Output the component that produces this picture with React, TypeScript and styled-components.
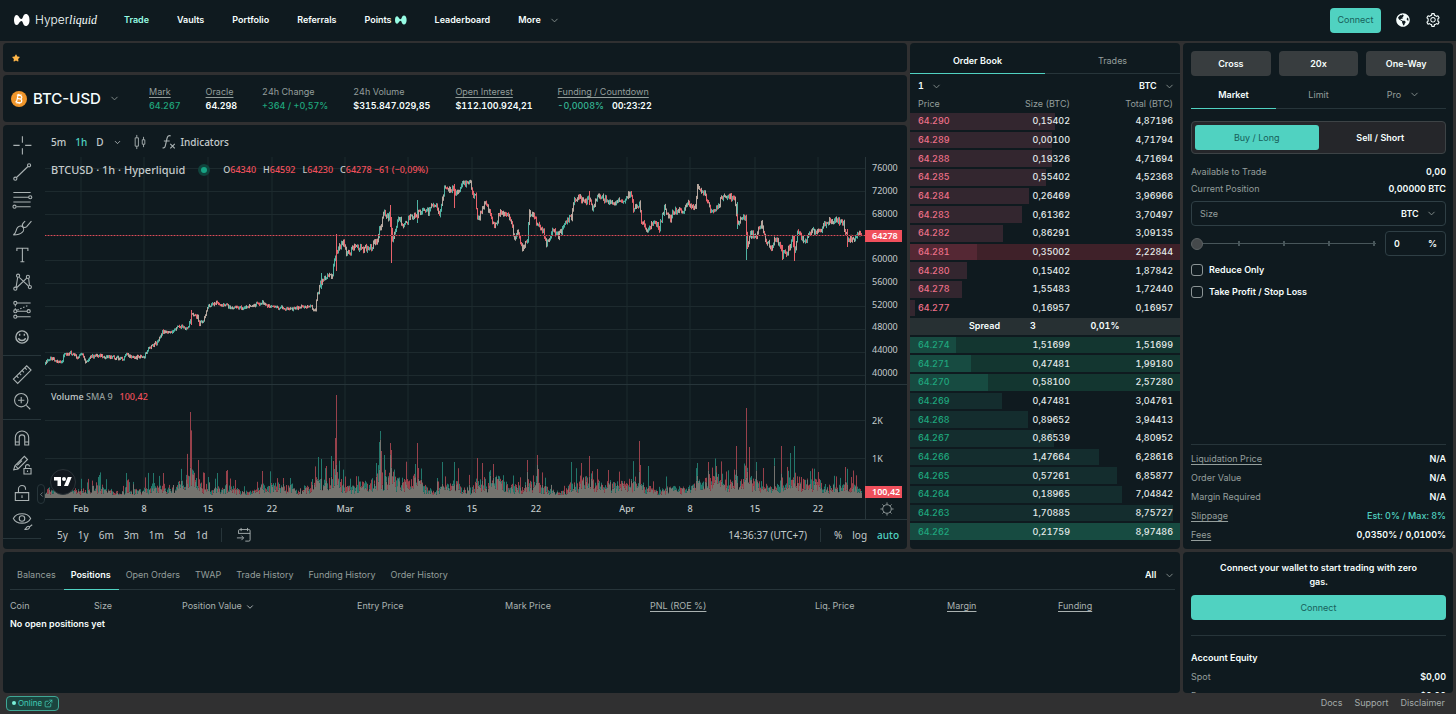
import React from "react";
import styled, { createGlobalStyle, css } from "styled-components";
import { ChevronDown, ChevronLeft, ExternalLink } from "lucide-react";
import { FaGlobeAmericas, FaStar } from "react-icons/fa";
import { AiOutlineSetting } from "react-icons/ai";

const c = {
  page: "#303031",
  panel: "#0f1a1f",
  line: "#27353a",
  grid: "#1d2a2e",
  text: "#f6fefd",
  muted: "#949e9c",
  teal: "#50d2c1",
  green: "#1fa67d",
  red: "#ed7088",
  chartText: "#c4cbcc",
  chartRed: "#f0505c",
};

const GlobalStyle = createGlobalStyle`
  *, *::before, *::after { box-sizing: border-box; }
  body {
    margin: 0;
    background: ${c.page};
    color: ${c.text};
    font: 400 9px/14px Inter, sans-serif;
    font-variant-numeric: tabular-nums;
  }
  button, input, select { font: inherit; color: inherit; margin: 0; }
  button, select { background: none; border: 0; padding: 0; cursor: pointer; }
  a { color: inherit; text-decoration: none; }
  svg { display: block; flex: none; }
`;

/* ---------- page frame ---------- */

const Page = styled.div`
  height: 100vh;
  min-height: 600px;
  display: flex;
  flex-direction: column;
`;

const Main = styled.main`
  flex: 1;
  min-height: 0;
  display: grid;
  grid-template-columns: minmax(0, 1fr) 270px 270px;
  grid-template-rows: auto minmax(0, 1fr);
  gap: 3px;
  padding: 2px 3px 0;
`;

const Panel = styled.section`
  background: ${c.panel};
  border-radius: 4px;
  min-width: 0;
  overflow: hidden;
`;

const Row = styled.div`
  display: flex;
  align-items: center;
  justify-content: space-between;
`;

const Muted = styled.span<{ $hint?: boolean }>`
  color: ${c.muted};
  ${(p) => p.$hint && css`text-decoration: underline; text-underline-offset: 2px;`}
`;

const Strong = styled.span<{ $color?: string }>`
  font-weight: ${(p) => (p.$color ? 500 : 600)};
  color: ${(p) => p.$color ?? c.text};
`;

/* ---------- header ---------- */

const Header = styled.header`
  height: 41px;
  flex: none;
  display: flex;
  align-items: center;
  padding: 0 15px 1px 14px;
  background: ${c.panel};
`;

const Brand = styled.a`
  display: flex;
  align-items: center;
  gap: 5px;
  width: 110px;
  font-size: 12px;
  font-weight: 300;
  line-height: 18px;
  em { font: italic 400 12px/18px "Liberation Serif", serif; }
`;

const Nav = styled.nav`
  display: flex;
  align-items: center;
  gap: 28px;
  font-weight: 600;
`;

const NavLink = styled.a<{ $active?: boolean }>`
  display: flex;
  align-items: center;
  gap: 3px;
  color: ${(p) => (p.$active ? "#97fce4" : c.text)};
`;

const NavMenu = styled.button`
  display: flex;
  align-items: center;
  gap: 8px;
  font-weight: 600;
`;

const HeaderTools = styled.div`
  margin-left: auto;
  display: flex;
  align-items: center;
  gap: 15px;
`;

const Primary = styled.button<{ $wide?: boolean }>`
  height: 25px;
  width: ${(p) => (p.$wide ? "100%" : "51px")};
  border-radius: 4px;
  background: ${c.teal};
  color: #17605a;
`;

const IconButton = styled.button`
  display: grid;
  place-items: center;
`;

const Bow = ({ size, color }: { size: number; color: string }) => (
  <svg width={size} height={size} viewBox="0 -1.5 16 16" aria-hidden="true">
    <path
      fill={color}
      d="M0 6.500C0 3.500 1 1.500 2.800 1.500C4.800 1.500 5.300 5.500 7.500 5.500C9 5.500 9 .5 11.800 .5C14.200 .5 15.500 3 15.500 6.500S14.200 12.500 11.800 12.500C9 12.500 9 7.500 7.500 7.500C5.300 7.500 4.800 11.500 2.800 11.500C1 11.500 0 9.500 0 6.500Z"
    />
  </svg>
);

/* ---------- market summary ---------- */

const MarketColumn = styled.div`
  display: flex;
  flex-direction: column;
  gap: 3px;
  min-width: 0;
`;

const Favorites = styled(Panel)`
  height: 29px;
  display: flex;
  align-items: center;
  padding-left: 9px;
`;

const Summary = styled(Panel)`
  height: 47px;
  display: flex;
  align-items: center;
  padding: 0 8px;
`;

const PairButton = styled.button`
  display: flex;
  align-items: center;
  gap: 6px;
  width: 138px;
  font-size: 15px;
  font-weight: 500;
  line-height: 20px;
  font-variant-numeric: normal;
  svg:last-child { margin-left: 2px; }
`;

const Stats = styled.dl`
  display: flex;
  gap: 25px;
  margin: 0;
  dd { margin: 0; }
`;

const Countdown = styled.span`
  margin-left: 8px;
  font-weight: 600;
  color: ${c.text};
`;

/* ---------- chart ---------- */

const ChartPanel = styled(Panel)`
  flex: 1;
  display: grid;
  grid-template-columns: 42px minmax(0, 1fr);
  font: 400 10px/14px "Noto Sans", sans-serif;
  color: ${c.chartText};
`;

const Tools = styled.div`
  display: flex;
  flex-direction: column;
  padding: 6px 0 6px;
`;

const ToolGroup = styled.div<{ $count: number }>`
  flex: ${(p) => p.$count} 0 auto;
  display: flex;
  flex-direction: column;
  width: 38px;
  padding-bottom: 4px;
  margin-bottom: 4px;
  border-bottom: 1px solid ${c.line};
`;

const ToolButton = styled.button`
  flex: 1;
  display: grid;
  place-items: center;
`;

const ChartBody = styled.div`
  position: relative;
  display: flex;
  flex-direction: column;
  min-width: 0;
`;

const ChartToolbar = styled.div`
  height: 32px;
  display: flex;
  align-items: center;
  padding: 2px 0 0 6px;
  gap: 9px;
`;

const ToolLabel = styled.button<{ $active?: boolean; $gap?: number }>`
  display: flex;
  align-items: center;
  gap: 3px;
  font-weight: 500;
  color: ${(p) => (p.$active ? c.teal : c.chartText)};
  margin-left: ${(p) => p.$gap ?? 0}px;
`;

const Plot = styled.div`
  flex: 1;
  display: grid;
  grid-template-columns: minmax(0, 1fr) 42px;
  grid-template-rows: 341px 21px;
`;

const Canvas = styled.svg`
  width: 100%;
  height: 100%;
  overflow: hidden;
  text { font: 500 9px "Noto Sans", sans-serif; fill: ${c.chartText}; text-anchor: middle; }
`;

const PriceAxis = styled.div`
  display: flex;
  flex-direction: column;
  border-left: 1px solid ${c.line};
  font-size: 9px;
`;

const PriceScale = styled.div<{ $h: number }>`
  height: ${(p) => p.$h}px;
  display: flex;
  flex-direction: column;
  & + & { border-top: 1px solid ${c.line}; padding-top: 17px; }
`;

const Tick = styled.span<{ $h?: number; $end?: boolean }>`
  ${(p) => (p.$h ? css`height: ${p.$h}px;` : css`flex: 1;`)}
  display: flex;
  align-items: ${(p) => (p.$end ? "flex-end" : "center")};
  padding-left: 6px;
`;

const PriceTag = styled.span`
  width: 37px;
  margin-left: -7px;
  padding-left: 7px;
  line-height: 12px;
  font-weight: 600;
  color: #fff;
  background: ${c.chartRed};
`;

const AxisCorner = styled.div`
  display: grid;
  place-items: center;
  border-left: 1px solid ${c.line};
`;

const Legend = styled.div<{ $top: number }>`
  position: absolute;
  left: 6px;
  top: ${(p) => p.$top}px;
  display: flex;
  align-items: center;
  gap: 7px;
  font-size: 9px;
  font-weight: 500;
`;

const Symbol = styled.span`
  font-size: 11px;
  line-height: 16px;
`;

const Live = styled.span`
  width: 12px;
  height: 12px;
  margin: 0 6px;
  border: 3px solid #10433c;
  border-radius: 50%;
  background: #17a384;
`;

const Down = styled.span`
  color: ${c.chartRed};
`;

const Watermark = styled.span`
  position: absolute;
  left: 5px;
  top: 344px;
  width: 26px;
  height: 26px;
  display: grid;
  place-items: center;
  border-radius: 50%;
  border: 1px solid #2a3338;
  background: #12181e;
`;

const Collapse = styled.button`
  position: absolute;
  left: -8px;
  top: 359px;
  width: 8px;
  height: 20px;
  display: grid;
  place-items: center;
  border: 1px solid ${c.line};
  border-radius: 4px;
`;

const RangeBar = styled.div`
  height: 30px;
  display: flex;
  align-items: center;
  gap: 10px;
  padding: 0 8px 0 12px;
  border-top: 1px solid ${c.line};
`;

const Divider = styled.span`
  width: 1px;
  height: 14px;
  margin: 0 3px;
  background: ${c.line};
`;

const Clock = styled.button`
  margin-left: auto;
`;

/* price path: plot x, plot y */
const pricePoints: number[][] = [
  [0, 207], [5, 201], [13, 206], [17, 204], [18, 198], [25, 196], [33, 200], [37, 197], [40, 205], [46, 200],
  [55, 199], [67, 200], [77, 202], [81, 198], [87, 201], [99, 199], [102, 193], [112, 185], [117, 174], [122, 175],
  [127, 176], [132, 169], [143, 171], [146, 157], [152, 160], [154, 167], [159, 162], [162, 150], [172, 146],
  [185, 150], [195, 151], [205, 149], [217, 146], [225, 150], [245, 152], [255, 150], [265, 150], [270, 153],
  [272, 138], [275, 128], [277, 120], [281, 121], [287, 119], [288, 106], [291, 96], [295, 88], [298, 84],
  [302, 98], [310, 90], [325, 92], [332, 81], [335, 70], [339, 55], [343, 61], [345, 58], [347, 84], [353, 60],
  [358, 68], [365, 60], [372, 58], [375, 54], [383, 55], [388, 47], [394, 56], [399, 32], [408, 32], [410, 38],
  [417, 26], [425, 26], [428, 43], [430, 35], [432, 63], [437, 53], [439, 46], [445, 56], [449, 71], [455, 54],
  [463, 58], [470, 83], [473, 73], [477, 94], [482, 81], [484, 56], [490, 63], [496, 70], [501, 86], [508, 73],
  [513, 79], [522, 63], [526, 61], [528, 43], [533, 39], [538, 46], [544, 40], [547, 51], [553, 38], [565, 46],
  [578, 44], [585, 37], [588, 51], [594, 46], [596, 63], [601, 73], [608, 65], [614, 71], [619, 51], [625, 63],
  [628, 55], [638, 53], [642, 47], [650, 48], [652, 31], [659, 36], [664, 52], [672, 53], [676, 41], [682, 40],
  [689, 40], [692, 65], [700, 60], [702, 91], [705, 76], [710, 80], [716, 65], [720, 83], [726, 91], [731, 78],
  [737, 98], [742, 95], [747, 81], [749, 96], [752, 75], [759, 83], [767, 74], [773, 75], [785, 63], [797, 65],
  [802, 81], [808, 83], [812, 75], [816, 78],
];

/* long wicks: plot x, top, bottom */
const wicks: number[][] = [
  [146, 153, 168], [291, 77, 114], [276, 116, 132], [345, 48, 70], [346, 60, 106], [372, 43, 66], [409, 27, 51],
  [544, 34, 48], [701, 60, 103], [737, 88, 103], [749, 78, 104], [692, 45, 72], [802, 72, 90],
];

/* volume peaks: plot x, height; a negative height marks a rising candle */
const volumePeaks: number[][] = [
  [53, -21], [81, -25], [108, -25], [118, 25], [145, 86], [153, 38], [163, -21], [172, -25], [181, 27], [190, 18],
  [217, 27], [245, -20], [273, -41], [276, -39], [281, 32], [291, 103], [290, 60], [331, -35], [335, -67],
  [339, -43], [345, 55], [346, 48], [372, 55], [373, 30], [397, -36], [409, -36], [432, 40], [437, 35], [448, 34],
  [482, 38], [492, -33], [526, -36], [536, 35], [544, 42], [563, 28], [594, 57], [595, 33], [603, -32], [652, -35],
  [663, 36], [671, 32], [691, 52], [701, 90], [704, 51], [711, -36], [718, 30], [729, -40], [736, 52], [745, -45],
  [749, -52], [773, 26], [800, 31],
];

const random = (seed: number) => () => {
  seed = (seed * 1664525 + 1013904223) % 4294967296;
  return seed / 4294967296;
};

function priceAt(x: number) {
  const i = Math.max(1, pricePoints.findIndex((p) => p[0] >= x));
  const [x0, y0] = pricePoints[i - 1];
  const [x1, y1] = pricePoints[i];
  return y0 + ((y1 - y0) * (x - x0)) / (x1 - x0);
}

function buildCandles() {
  const rnd = random(7);
  const paths = { up: "", down: "", mixed: "" };
  let prev = priceAt(0);
  for (let x = 0; x <= 816; x++) {
    const swing = x < 271 ? 3 : 6;
    const y = priceAt(x) + (rnd() - 0.5) * swing;
    const top = Math.min(prev, y) - rnd() * (swing / 3) - 0.5;
    const bottom = Math.max(prev, y) + rnd() * (swing / 3) + 0.5;
    const key = rnd() < 0.4 ? "mixed" : y < prev ? "up" : "down";
    paths[key] += `M${x + 0.5} ${top.toFixed(1)}V${bottom.toFixed(1)}`;
    prev = y;
  }
  wicks.forEach(([x, top, bottom], i) => {
    paths[i % 3 === 2 ? "up" : "down"] += `M${x + 0.5} ${top}V${bottom}`;
  });
  return paths;
}

function buildVolume() {
  const rnd = random(21);
  const paths = { up: "", down: "", mixed: "" };
  for (let x = 0; x <= 816; x++) {
    const near = volumePeaks.reduce((m, [px, h]) => Math.max(m, (Math.abs(h) * 0.5) / (1 + Math.abs(px - x) / 3)), 0);
    const swell = 1 + 0.35 * Math.sin(x / 17) + 0.25 * Math.sin(x / 7);
    const level = (x < 271 ? 7 : 9) * swell + near * 0.6;
    let a = level * (0.35 + rnd() * 0.9);
    let b = level * (0.35 + rnd() * 0.9);
    if (rnd() > 0.88) a *= 1.9;
    if (rnd() > 0.88) b *= 1.9;
    const peak = volumePeaks.find((p) => p[0] === x);
    if (peak) {
      if (peak[1] > 0) b = peak[1];
      else a = -peak[1];
    }
    const low = 341 - Math.max(3, Math.min(a, b));
    const high = 341 - Math.max(4, a, b);
    paths.mixed += `M${x + 0.5} 341V${low.toFixed(1)}`;
    paths[a > b ? "up" : "down"] += `M${x + 0.5} ${low.toFixed(1)}V${high.toFixed(1)}`;
  }
  return paths;
}

const candles = buildCandles();
const volume = buildVolume();

const dates: [string, number][] = [
  ["Feb", 36], ["8", 99], ["15", 163], ["22", 227], ["Mar", 300], ["8", 363], ["15", 427], ["22", 491],
  ["Apr", 582], ["8", 645], ["15", 710], ["22", 773],
];
const pct = (x: number) => `${(x / 820) * 100}%`;
const prices = ["76000", "72000", "68000", "", "60000", "56000", "52000", "48000", "44000", "40000"];

function PriceCanvas() {
  return (
    <Canvas role="img" aria-label="BTCUSD price and volume">
      <g stroke={c.grid}>
        {dates.map(([, x]) => (
          <line key={x} x1={pct(x)} x2={pct(x)} y1="0" y2="341" />
        ))}
        {prices.map((p, i) => p && (
          <line key={i} x1="0" x2="100%" y1={11.5 + i * 23} y2={11.5 + i * 23} />
        ))}
        <line x1="0" x2="100%" y1="263.5" y2="263.5" />
        <line x1="0" x2="100%" y1="301.5" y2="301.5" />
      </g>
      <line x1="0" x2="100%" y1="227.5" y2="227.5" stroke={c.line} />
      <svg viewBox="0 0 820 341" preserveAspectRatio="none" width="100%" height="341" fill="none">
        <path d={volume.mixed} stroke="#75746f" />
        <path d={volume.up} stroke="#22776b" />
        <path d={volume.down} stroke="#98414b" />
        <path d={candles.mixed} stroke="#b7a79e" />
        <path d={candles.up} stroke="#4fb3a3" />
        <path d={candles.down} stroke="#e8626b" />
      </svg>
      <line x1="0" x2="100%" y1="78.5" y2="78.5" stroke="#6b2f38" />
      <line x1="0" x2="100%" y1="78.5" y2="78.5" stroke="#d94f5a" strokeDasharray="1 2" />
    </Canvas>
  );
}

function TimeAxis() {
  return (
    <Canvas aria-label="Dates">
      {dates.map(([label, x]) => (
        <text key={x} x={pct(x)} y="14">{label}</text>
      ))}
    </Canvas>
  );
}

const Glyph = ({ children, size = 22 }: { children: React.ReactNode; size?: number }) => (
  <svg width={size} height={size} viewBox="0 0 28 28" fill="none" stroke="#aab2b3" strokeWidth="1.4" aria-hidden="true">
    {children}
  </svg>
);

const toolGroups: [string, React.ReactNode][][] = [
  [
    ["Cross", <path d="M14.500 3v8M14.500 18v8M3 14.500h8M18 14.500h8" />],
    ["Trend line", <><path d="M7 21 21.500 7" /><circle cx="5.500" cy="22.500" r="2" /><circle cx="23" cy="5.500" r="2" /></>],
    ["Fib retracement", <><path d="M3 4.500h22M3 10.500h19.500M3 16.500h22M7 22.500h18" /><circle cx="24.500" cy="10.500" r="2" /><circle cx="4.500" cy="22.500" r="2" /></>],
    ["Brush", <path d="M3 24c4-2 3-7 5.500-9.500 2-2 5-2 6.500-.5s1.500 4.500-.5 6.500C12 23 8 24 3 24ZM15 13.500c1.500 1.500 3.500 1.500 5 0L26 6.500M15 13.500c-1-1.500-.5-3.500 1-5L18 6.500" />],
    ["Text", <path d="M7.500 9V5.500h14V9M14.500 5.500v17M12 22.500h5" />],
    ["Pattern", <><path d="M6.500 20.500 8.500 8M10.500 8 22 19M22.500 9.500l1 9M20 9 7.500 21" /><circle cx="9" cy="6" r="2" /><circle cx="21.500" cy="7.500" r="2" /><circle cx="5.500" cy="22.500" r="2" /><circle cx="24" cy="20.500" r="2" /></>],
    ["Forecast", <><path d="M7.500 5H25M7.500 15.500h13M7.500 22.500H25" /><path strokeDasharray="2 2" d="M5.500 7.500v5M8 14l14-6" /><circle cx="5.500" cy="5" r="2" /><circle cx="5.500" cy="15.500" r="2" /><circle cx="22.500" cy="15.500" r="2" /><circle cx="5.500" cy="22.500" r="2" /></>],
    ["Icons", <g strokeWidth="1.800"><circle cx="14" cy="14" r="7.800" /><path d="M9.500 15.500c1 4 8 4 9 0M11 10v2.500M17 10v2.500" /></g>],
  ],
  [
    ["Measure", <path d="m3 20.500 17-17 5.500 5.500-17 17ZM7 16.500l2.500 2.500M10.500 13l2.500 2.500M14 9.500l2.500 2.500M17.500 6l2.500 2.500" />],
    ["Zoom in", <><circle cx="13" cy="13" r="8.500" /><path d="m19.500 19.500 5 5M13 9v8M9 13h8" /></>],
  ],
  [
    ["Magnet", <path d="M5.500 23V13.500a8.500 8.500 0 0 1 17 0V23h-5v-9.500a3.500 3.500 0 0 0-7 0V23ZM5.500 19h5M17.500 19h5" />],
    ["Stay in drawing mode", <><path d="M3.500 20 5 15 17 3l4 4L9 19ZM6 15.500l3 3M14 8.500l-6 6" /><path d="M16.500 18.500h9v7h-9ZM18.500 18.500V16a2.500 2.500 0 0 1 5 0M21 21v2" /></>],
    ["Lock drawings", <path d="M5.500 13.500h17v10h-17ZM9.500 13.500V9a4.500 4.500 0 0 1 9 0v1M14 17v3.500" />],
    ["Hide drawings", <><path d="M3 12c4-8 18-8 22 0-4 8-18 8-22 0Z" /><circle cx="14" cy="12" r="3.500" /><path d="M17 26c3 0 2-4 5-4 2 0 2 2.500 0 3.500-1.500.8-3 .5-5 .5ZM23 23l4-3" /></>],
  ],
];

/* ---------- order book ---------- */

const Book = styled(Panel)`
  display: flex;
  flex-direction: column;
  padding-bottom: 9px;
`;

const Tabs = styled.div<{ $h: number }>`
  display: flex;
  height: ${(p) => p.$h}px;
  border-bottom: 1px solid ${c.line};
`;

const Tab = styled.button<{ $active?: boolean; $fit?: boolean }>`
  ${(p) => (p.$fit ? css`padding: 0 8px 0 7px;` : css`flex: 1; padding-top: 5px;`)}
  display: flex;
  align-items: center;
  justify-content: center;
  gap: 8px;
  margin-bottom: -1px;
  border-bottom: 1px solid ${(p) => (p.$active ? c.teal : "transparent")};
  color: ${(p) => (p.$active ? c.text : c.muted)};
  font-weight: ${(p) => (p.$active ? 600 : 400)};
`;

const BookFilters = styled(Row)`
  height: 20px;
  padding: 4px 5px 0 8px;
`;

const SelectBox = styled.span`
  display: inline-flex;
  align-items: center;
  gap: 7px;
  font-weight: 600;
  select { appearance: none; outline: 0; }
  option { background: ${c.panel}; }
`;

const BookTable = styled.table`
  flex: 1;
  display: flex;
  flex-direction: column;
  thead, tbody { display: grid; }
  tbody { flex: 1; grid-auto-rows: minmax(0, 1fr); row-gap: 2px; }
  tr {
    display: grid;
    grid-template-columns: 1fr 78px 103px;
    align-items: center;
    padding: 0 7px 0 8px;
  }
  th { font-weight: 400; color: ${c.muted}; line-height: 19px; }
  th, td { padding: 0; text-align: right; }
  th:first-child, td:first-child { text-align: left; }
`;

const Level = styled.tr<{ $side: "ask" | "bid"; $flash?: 0 | 1 | 2 }>`
  background-color: ${(p) =>
    p.$flash ? (p.$side === "ask" ? "#3f2129" : p.$flash === 2 ? "#1a4d44" : "#133630") : "transparent"};
  background-image: ${(p) => {
    const tone = p.$side === "ask" ? (p.$flash ? "#552834" : "#33262f") : p.$flash ? "#174b41" : "#142d2e";
    return `linear-gradient(${tone}, ${tone})`;
  }};
  background-repeat: no-repeat;
  font-weight: 500;
  td { color: #e3eaea; }
  td:first-child { color: ${(p) => (p.$side === "ask" ? c.red : c.green)}; }
`;

const Spread = styled.tr`
  background: #273033;
  font-weight: 600;
  &&& { grid-template-columns: 82px 66px 78px; }
  &&& td { text-align: center; }
  &&& td:first-child { text-align: right; }
`;

type Entry = [string, string, string, number, (0 | 1 | 2)?];

const asks: Entry[] = [
  ["64.290", "0,15402", "4,87196", 145], ["64.289", "0,00100", "4,71794", 142], ["64.288", "0,19326", "4,71694", 142],
  ["64.285", "0,55402", "4,52368", 136], ["64.284", "0,26469", "3,96966", 119], ["64.283", "0,61362", "3,70497", 112],
  ["64.282", "0,86291", "3,09135", 93], ["64.281", "0,35002", "2,22844", 67, 1], ["64.280", "0,15402", "1,87842", 57],
  ["64.278", "1,55483", "1,72440", 52], ["64.277", "0,16957", "0,16957", 5],
];
const bids: Entry[] = [
  ["64.274", "1,51699", "1,51699", 46, 1], ["64.271", "0,47481", "1,99180", 61, 1], ["64.270", "0,58100", "2,57280", 78, 1],
  ["64.269", "0,47481", "3,04761", 92], ["64.268", "0,89652", "3,94413", 118], ["64.267", "0,86539", "4,80952", 144],
  ["64.266", "1,47664", "6,28616", 189], ["64.265", "0,57261", "6,85877", 207], ["64.264", "0,18965", "7,04842", 212],
  ["64.263", "1,70885", "8,75727", 263], ["64.262", "0,21759", "8,97486", 270, 2],
];

const Levels = ({ rows, side }: { rows: Entry[]; side: "ask" | "bid" }) => (
  <>
    {rows.map(([price, size, total, depth, flash]) => (
      <Level key={price} $side={side} $flash={flash} style={{ backgroundSize: `${(depth / 270) * 100}% 100%` }}>
        <td>{price}</td>
        <td>{size}</td>
        <td>{total}</td>
      </Level>
    ))}
  </>
);

/* ---------- order form ---------- */

const Ticket = styled(Panel)`
  display: flex;
  flex-direction: column;
  padding: 8px 7px 5px 8px;
`;

const Modes = styled.div`
  display: grid;
  grid-template-columns: repeat(3, 1fr);
  gap: 8px;
`;

const ModeButton = styled.button`
  height: 25px;
  border-radius: 4px;
  background: #383d3f;
  font-weight: 600;
  font-variant-numeric: normal;
`;

const SideSwitch = styled.div`
  height: 33px;
  display: grid;
  grid-template-columns: 1fr 1fr;
  margin: 12px 0 9px;
  padding: 3px;
  border: 1px solid #3d4346;
  border-radius: 4px;
  background: #25262a;
`;

const SideButton = styled.button<{ $active?: boolean }>`
  border-radius: 3px;
  ${(p) => (p.$active ? css`background: ${c.teal}; color: #17605a;` : css`font-weight: 600;`)}
`;

const Balance = styled(Row)`
  height: 17px;
`;

const Field = styled.div`
  height: 25px;
  display: flex;
  align-items: center;
  gap: 8px;
  padding: 0 8px;
  border: 1px solid #2f3f45;
  border-radius: 4px;
  font-weight: 600;
  input {
    flex: 1;
    min-width: 0;
    width: 0;
    padding: 0;
    border: 0;
    outline: 0;
    background: none;
  }
  input::placeholder { color: ${c.muted}; font-weight: 400; opacity: 1; }
`;

const SizeField = styled(Field)`
  margin: 4px 0 5px;
`;

const SliderRow = styled.div`
  display: grid;
  grid-template-columns: 1fr 61px;
  gap: 9px;
  align-items: center;
`;

const Slider = styled.input`
  appearance: none;
  width: 100%;
  height: 12px;
  margin: 0;
  background:
    repeating-linear-gradient(90deg, transparent 0 43px, #48565a 43px 45px) 4px 50% / 181px 5px no-repeat,
    linear-gradient(#48565a, #48565a) 4px 50% / 181px 1px no-repeat;
  &::-webkit-slider-thumb {
    appearance: none;
    width: 12px;
    height: 12px;
    border: 1px solid #5b6163;
    border-radius: 50%;
    background: #45494b;
  }
`;

const Checks = styled.div`
  display: grid;
  gap: 8px;
  padding-top: 7px;
`;

const Check = styled.label`
  display: flex;
  align-items: center;
  gap: 6px;
  font-weight: 600;
  input {
    appearance: none;
    width: 12px;
    height: 12px;
    border: 1px solid #8b9495;
    border-radius: 3px;
  }
`;

const Details = styled.div`
  margin-top: auto;
  padding-top: 4px;
  border-top: 1px solid ${c.line};
`;

const DetailRow = styled(Row)`
  height: 19px;
`;

/* ---------- positions and account ---------- */

const Positions = styled(Panel)`
  grid-column: 1 / 3;
  padding: 9px 5px 0 7px;
`;

const PositionTabs = styled(Row)`
  border-bottom: 1px solid ${c.line};
  ${Tabs} { border-bottom: 0; }
`;

const PositionTable = styled.table`
  width: 100%;
  margin-top: 7px;
  table-layout: fixed;
  border-collapse: collapse;
  th, td { padding: 0; text-align: left; line-height: 18px; }
  th { font-weight: 400; color: #aab2b1; }
  td { font-weight: 600; }
`;

const Head = styled.th<{ $w: number; $hint?: boolean }>`
  width: ${(p) => p.$w}px;
  span { ${(p) => p.$hint && css`text-decoration: underline; text-underline-offset: 2px;`} }
  svg { display: inline-block; vertical-align: middle; margin-left: 3px; }
`;

const columns: [string, number, boolean][] = [
  ["Coin", 84, false], ["Size", 88, false], ["Position Value", 175, false], ["Entry Price", 148, false],
  ["Mark Price", 145, false], ["PNL (ROE %)", 165, true], ["Liq. Price", 132, false], ["Margin", 111, true],
  ["Funding", 117, true],
];

const Account = styled(Panel)`
  padding: 9px 7px 0 8px;
`;

const Prompt = styled.p`
  margin: 0 20px 6px;
  text-align: center;
  font-weight: 600;
`;

const Equity = styled.div`
  margin-top: 15px;
  padding-top: 12px;
  border-top: 1px solid ${c.line};
`;

const Footer = styled.footer`
  height: 21px;
  flex: none;
  display: flex;
  align-items: center;
  justify-content: space-between;
  padding: 0 11px 1px 6px;
`;

const Online = styled.a`
  display: flex;
  align-items: center;
  gap: 2px;
  height: 15px;
  padding: 0 5px;
  border: 1px solid #3fa796;
  border-radius: 4px;
  background: #1b443e;
  color: #42cdb6;
  font-size: 8px;
  &::before {
    content: "";
    width: 4px;
    height: 4px;
    border-radius: 50%;
    background: #7af0d8;
  }
`;

const FooterLinks = styled.nav`
  display: flex;
  gap: 12px;
  color: #a3abaa;
`;

const Caret = ({ size = 11, color = "#87908f" }: { size?: number; color?: string }) => (
  <ChevronDown size={size} color={color} aria-hidden="true" />
);

function Picker({ label, value }: { label: string; value: string }) {
  return (
    <SelectBox>
      <select aria-label={label} defaultValue={value}>
        <option>{value}</option>
      </select>
      <Caret />
    </SelectBox>
  );
}

export default function App() {
  return (
    <Page>
      <GlobalStyle />
      <Header>
        <Brand href="#">
          <Bow size={16} color="#fff" />
          <span>Hyper<em>liquid</em></span>
        </Brand>
        <Nav>
          <NavLink href="#" $active>Trade</NavLink>
          <NavLink href="#">Vaults</NavLink>
          <NavLink href="#">Portfolio</NavLink>
          <NavLink href="#">Referrals</NavLink>
          <NavLink href="#">Points <Bow size={12} color="#97fce4" /></NavLink>
          <NavLink href="#">Leaderboard</NavLink>
          <NavMenu>More <Caret /></NavMenu>
        </Nav>
        <HeaderTools>
          <Primary>Connect</Primary>
          <IconButton aria-label="Language"><FaGlobeAmericas size={14} /></IconButton>
          <IconButton aria-label="Settings"><AiOutlineSetting size={16} /></IconButton>
        </HeaderTools>
      </Header>

      <Main>
        <MarketColumn>
          <Favorites aria-label="Favorites"><FaStar size={8} color="#ffb648" /></Favorites>
          <Summary>
            <PairButton>
              <svg width="16" height="16" viewBox="0 0 32 32" aria-hidden="true">
                <circle cx="16" cy="16" r="16" fill="#f0962b" />
                <path
                  transform="rotate(13 16 16)"
                  d="M12.500 9v14M10 9h7.500c4.500 0 4.500 6.500 0 6.500h-5 6c5 0 5 7.500 0 7.500H10M14 6v3M18 6v3M14 23v3M18 23v3"
                  fill="none" stroke="#fff" strokeWidth="2.400"
                />
              </svg>
              BTC-USD
              <Caret />
            </PairButton>
            <Stats>
              <div><dt><Muted $hint>Mark</Muted></dt><dd><Strong $color={c.green}>64.267</Strong></dd></div>
              <div><dt><Muted $hint>Oracle</Muted></dt><dd><Strong>64.298</Strong></dd></div>
              <div><dt><Muted>24h Change</Muted></dt><dd><Strong $color={c.green}>+364 / +0,57%</Strong></dd></div>
              <div><dt><Muted>24h Volume</Muted></dt><dd><Strong>$315.847.029,85</Strong></dd></div>
              <div><dt><Muted $hint>Open Interest</Muted></dt><dd><Strong>$112.100.924,21</Strong></dd></div>
              <div>
                <dt><Muted $hint>Funding / Countdown</Muted></dt>
                <dd><Strong $color="#35b795">-0,0008%<Countdown>00:23:22</Countdown></Strong></dd>
              </div>
            </Stats>
          </Summary>

          <ChartPanel>
            <Tools>
              {toolGroups.map((group, i) => (
                <ToolGroup key={i} $count={group.length}>
                  {group.map(([name, drawing]) => (
                    <ToolButton key={name} aria-label={name}><Glyph>{drawing}</Glyph></ToolButton>
                  ))}
                </ToolGroup>
              ))}
            </Tools>
            <ChartBody>
              <ChartToolbar>
                <ToolLabel>5m</ToolLabel>
                <ToolLabel $active>1h</ToolLabel>
                <ToolLabel>D</ToolLabel>
                <ToolLabel aria-label="More intervals"><ChevronDown size={9} /></ToolLabel>
                <ToolLabel aria-label="Candles">
                  <Glyph size={18}><path d="M6.500 7.500h5v13h-5ZM9 3v4.500M9 20.500V25M17.500 10.500h4v7h-4ZM19.500 6v4.500M19.500 17.500V22" /></Glyph>
                </ToolLabel>
                <ToolLabel $gap={2}>
                  <Glyph size={18}><path strokeWidth="1.800" d="M4 23c3 1 4-1 4.500-4L11 8c.7-3 2.500-4.500 5.500-3.500M6 12.500h9M16 17l7 7M23 17l-7 7" /></Glyph>
                  Indicators
                </ToolLabel>
              </ChartToolbar>
              <Plot>
                <PriceCanvas />
                <PriceAxis>
                  <PriceScale $h={227}>
                    {prices.map((p, i) => (
                      <Tick key={i}>{p || <PriceTag>64278</PriceTag>}</Tick>
                    ))}
                  </PriceScale>
                  <PriceScale $h={114}>
                    <Tick $h={38}>2K</Tick>
                    <Tick $h={38}>1K</Tick>
                    <Tick $end><PriceTag>100,42</PriceTag></Tick>
                  </PriceScale>
                </PriceAxis>
                <TimeAxis />
                <AxisCorner>
                  <Glyph size={16}><circle cx="14" cy="14" r="7.500" /><path d="M14 2.500V6M14 22v3.500M2.500 14H6M22 14h3.500M6 6l2.500 2.500M19.500 19.500 22 22M6 22l2.500-2.500M19.500 8.500 22 6" /></Glyph>
                </AxisCorner>
              </Plot>
              <RangeBar>
                {["5y", "1y", "6m", "3m", "1m", "5d", "1d"].map((r) => (
                  <button key={r}>{r}</button>
                ))}
                <Divider />
                <IconButton aria-label="Go to date">
                  <Glyph size={18}><path d="M5.500 12V7.500a2 2 0 0 1 2-2h14a2 2 0 0 1 2 2v14a2 2 0 0 1-2 2H16M9.500 3v5M19.500 3v5M5.500 11.500h18M3 18.500h10M10 15l3.500 3.500L10 22" /></Glyph>
                </IconButton>
                <Clock>14:36:37 (UTC+7)</Clock>
                <Divider />
                <button>%</button>
                <button>log</button>
                <ToolLabel $active>auto</ToolLabel>
              </RangeBar>
              <Legend $top={37}>
                <Symbol>BTCUSD · 1h · Hyperliquid</Symbol>
                <Live />
                <span>O<Down>64340</Down></span>
                <span>H<Down>64592</Down></span>
                <span>L<Down>64230</Down></span>
                <span>C<Down>64278 −61 (−0,09%)</Down></span>
              </Legend>
              <Legend $top={265}>
                <span>Volume <Muted>SMA 9</Muted></span>
                <Down>100,42</Down>
              </Legend>
              <Watermark>
                <svg width="18" height="14" viewBox="0 0 36 28" fill="#fff" aria-hidden="true">
                  <path d="M14 22H7V11H0V4h14v18ZM28 22h-8l7.500-18h8L28 22Z" />
                  <circle cx="20" cy="8" r="4" />
                </svg>
              </Watermark>
              <Collapse aria-label="Hide drawings toolbar"><ChevronLeft size={7} color="#aab2b3" /></Collapse>
            </ChartBody>
          </ChartPanel>
        </MarketColumn>

        <Book>
          <Tabs $h={31}>
            <Tab $active>Order Book</Tab>
            <Tab>Trades</Tab>
          </Tabs>
          <BookFilters>
            <Picker label="Tick size" value="1" />
            <Picker label="Unit" value="BTC" />
          </BookFilters>
          <BookTable>
            <thead>
              <tr><th>Price</th><th>Size (BTC)</th><th>Total (BTC)</th></tr>
            </thead>
            <tbody>
              <Levels rows={asks} side="ask" />
              <Spread><td>Spread</td><td>3</td><td>0,01%</td></Spread>
              <Levels rows={bids} side="bid" />
            </tbody>
          </BookTable>
        </Book>

        <Ticket>
          <Modes>
            <ModeButton>Cross</ModeButton>
            <ModeButton>20x</ModeButton>
            <ModeButton>One-Way</ModeButton>
          </Modes>
          <Tabs $h={33}>
            <Tab $active>Market</Tab>
            <Tab>Limit</Tab>
            <Tab>Pro <Caret /></Tab>
          </Tabs>
          <SideSwitch>
            <SideButton $active>Buy / Long</SideButton>
            <SideButton>Sell / Short</SideButton>
          </SideSwitch>
          <Balance><Muted>Available to Trade</Muted><Strong>0,00</Strong></Balance>
          <Balance><Muted>Current Position</Muted><Strong>0,00000 BTC</Strong></Balance>
          <SizeField>
            <input aria-label="Size" placeholder="Size" />
            <Picker label="Size unit" value="BTC" />
          </SizeField>
          <SliderRow>
            <Slider type="range" min={0} max={100} defaultValue={0} aria-label="Size percent" />
            <Field>
              <input aria-label="Percent" defaultValue="0" />
              %
            </Field>
          </SliderRow>
          <Checks>
            <Check><input type="checkbox" />Reduce Only</Check>
            <Check><input type="checkbox" />Take Profit / Stop Loss</Check>
          </Checks>
          <Details>
            <DetailRow><Muted $hint>Liquidation Price</Muted><Strong>N/A</Strong></DetailRow>
            <DetailRow><Muted>Order Value</Muted><Strong>N/A</Strong></DetailRow>
            <DetailRow><Muted>Margin Required</Muted><Strong>N/A</Strong></DetailRow>
            <DetailRow><Muted $hint>Slippage</Muted><Strong $color={c.teal}>Est: 0% / Max: 8%</Strong></DetailRow>
            <DetailRow><Muted $hint>Fees</Muted><Strong>0,0350% / 0,0100%</Strong></DetailRow>
          </Details>
        </Ticket>

        <Positions>
          <PositionTabs>
            <Tabs $h={28}>
              <Tab $fit>Balances</Tab>
              <Tab $fit $active>Positions</Tab>
              <Tab $fit>Open Orders</Tab>
              <Tab $fit>TWAP</Tab>
              <Tab $fit>Trade History</Tab>
              <Tab $fit>Funding History</Tab>
              <Tab $fit>Order History</Tab>
            </Tabs>
            <Picker label="Side" value="All" />
          </PositionTabs>
          <PositionTable>
            <thead>
              <tr>
                {columns.map(([name, w, hint]) => (
                  <Head key={name} $w={w} $hint={hint}>
                    <span>{name}</span>
                    {name === "Position Value" && <Caret size={10} color="#c4cbcc" />}
                  </Head>
                ))}
              </tr>
            </thead>
            <tbody>
              <tr><td colSpan={9}>No open positions yet</td></tr>
            </tbody>
          </PositionTable>
        </Positions>

        <Account>
          <Prompt>Connect your wallet to start trading with zero gas.</Prompt>
          <Primary $wide>Connect</Primary>
          <Equity>
            <DetailRow><Strong>Account Equity</Strong></DetailRow>
            <DetailRow><Muted>Spot</Muted><Strong>$0,00</Strong></DetailRow>
            <DetailRow><Muted>Perps</Muted><Strong>$0,00</Strong></DetailRow>
          </Equity>
        </Account>
      </Main>

      <Footer>
        <Online href="#">Online<ExternalLink size={9} /></Online>
        <FooterLinks>
          <a href="#">Docs</a>
          <a href="#">Support</a>
          <a href="#">Disclaimer</a>
        </FooterLinks>
      </Footer>
    </Page>
  );
}
